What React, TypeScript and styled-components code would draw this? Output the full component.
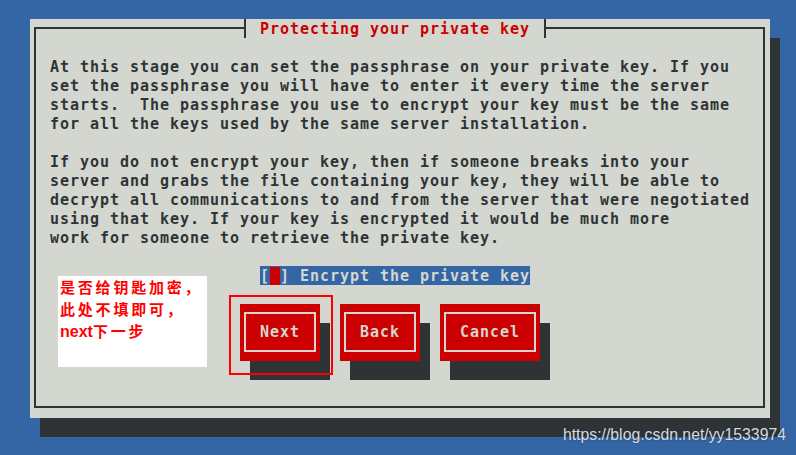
import React, { ReactElement } from 'react';
import styled, { createGlobalStyle } from 'styled-components';

const Colors = {
  desktop: '#3465a4',
  panel: '#d3d7cf',
  ink: '#2e3436',
  red: '#cc0000',
  note: '#ff0000',
};

const GlobalStyle = createGlobalStyle`
  html, body {
    margin: 0;
    padding: 0;
    background: ${Colors.desktop};
  }
`;

const Screen = styled.div`
  position: relative;
  width: 796px;
  height: 455px;
  padding: 19px 0 0 30px;
  box-sizing: border-box;
  overflow: hidden;
  background: ${Colors.desktop};
  font-family: "DejaVu Sans Mono", "Liberation Mono", monospace;
  font-weight: bold;
  font-size: 15px;
  letter-spacing: 0.97px;
  line-height: 19px;
`;

const Dialog = styled.div`
  position: relative;
  width: 740px;
  height: 399px;
  padding: 8px 5px 10px 4px;
  box-sizing: border-box;
  background: ${Colors.panel};
  box-shadow: 10px 19px 0 ${Colors.ink};
`;

const Frame = styled.div`
  height: 100%;
  border: 2px solid ${Colors.ink};
  box-sizing: border-box;
  padding: 28px 0 0 14px;
  display: flex;
  flex-direction: column;
`;

const Title = styled.div`
  position: absolute;
  left: 210px;
  top: 0;
  height: 19px;
  display: flex;
  background: ${Colors.panel};
`;

const Tee = styled.span<{ $side: 'left' | 'right' }>`
  position: relative;
  width: 10px;
  height: 19px;

  &::before {
    content: '';
    position: absolute;
    left: 4px;
    top: 0;
    width: 2px;
    height: 19px;
    background: ${Colors.ink};
  }

  &::after {
    content: '';
    position: absolute;
    top: 8px;
    height: 2px;
    width: 6px;
    background: ${Colors.ink};
    ${(p) => (p.$side === 'left' ? 'left: 0;' : 'right: 0;')}
  }
`;

const TitleText = styled.span`
  height: 19px;
  line-height: 20px;
  color: ${Colors.red};
  white-space: pre;
`;

/* line-height a touch taller than the cell drops the baseline 1px, like the console font */
const Line = styled.div`
  height: 19px;
  line-height: 21px;
  color: ${Colors.ink};
  white-space: pre;
`;

const CheckRow = styled.div`
  display: flex;
  height: 19px;
  margin: 19px 0 0 210px;
`;

const Highlight = styled.span`
  background: ${Colors.desktop};
  color: ${Colors.panel};
  white-space: pre;
  line-height: 20px;
  height: 19px;
`;

const Cursor = styled.span`
  background: ${Colors.red};
`;

const ButtonRow = styled.div`
  display: flex;
  gap: 20px;
  margin: 19px 0 0 190px;
`;

const Button = styled.div`
  position: relative;
  padding: 8px 4px 9px;
  background: ${Colors.red};
  box-shadow: 10px 19px 0 ${Colors.ink};
`;

const ButtonFace = styled.div`
  height: 40px;
  box-sizing: border-box;
  border: 2px solid ${Colors.panel};
  padding: 1px 14px 0;
  display: flex;
  align-items: center;
  color: ${Colors.panel};
  white-space: pre;
`;

const Mark = styled.div`
  position: absolute;
  left: -11px;
  top: -9px;
  width: 104px;
  height: 80px;
  box-sizing: border-box;
  border: 2px solid ${Colors.note};
`;

const Note = styled.div`
  position: absolute;
  left: 58px;
  top: 276px;
  width: 149px;
  height: 91px;
  box-sizing: border-box;
  padding: 0 0 0 2px;
  background: #ffffff;
  color: ${Colors.note};
  font-family: "Noto Sans CJK SC", sans-serif;
  font-size: 15px;
  letter-spacing: 2.8px;
  line-height: 22px;
  font-weight: bold;
`;

const NoteLine = styled.div`
  height: 22px;
  white-space: nowrap;
`;

const NoteLatin = styled.span`
  font-family: "Liberation Sans", Arial, sans-serif;
  font-size: 16px;
  letter-spacing: 0;
`;

const Watermark = styled.div`
  position: absolute;
  right: 10px;
  top: 425px;
  font-family: "Liberation Sans", Arial, sans-serif;
  font-weight: normal;
  font-size: 15.8px;
  letter-spacing: 0;
  line-height: 20px;
  color: #d6dade;
  text-shadow: 0 0 2px rgba(30, 40, 50, 0.6);
`;

const paragraphs = [
  [
    'At this stage you can set the passphrase on your private key. If you',
    'set the passphrase you will have to enter it every time the server',
    'starts.  The passphrase you use to encrypt your key must be the same',
    'for all the keys used by the same server installation.',
  ],
  [
    'If you do not encrypt your key, then if someone breaks into your',
    'server and grabs the file containing your key, they will be able to',
    'decrypt all communications to and from the server that were negotiated',
    'using that key. If your key is encrypted it would be much more',
    'work for someone to retrieve the private key.',
  ],
];

const buttons = ['Next', 'Back', 'Cancel'];

const App = (): ReactElement => {
  return (
    <>
      <GlobalStyle />
      <Screen>
        <Dialog>
          <Title>
            <Tee $side="left" />
            <TitleText> Protecting your private key </TitleText>
            <Tee $side="right" />
          </Title>
          <Frame>
            {paragraphs[0].map((l) => (
              <Line key={l}>{l}</Line>
            ))}
            <Line />
            {paragraphs[1].map((l) => (
              <Line key={l}>{l}</Line>
            ))}
            <CheckRow>
              <Highlight>
                [<Cursor> </Cursor>] Encrypt the private key
              </Highlight>
            </CheckRow>
            <ButtonRow>
              {buttons.map((b, i) => (
                <Button key={b}>
                  <ButtonFace>{b}</ButtonFace>
                  {i === 0 && <Mark />}
                </Button>
              ))}
            </ButtonRow>
          </Frame>
        </Dialog>
        <Note>
          <NoteLine>是否给钥匙加密，</NoteLine>
          <NoteLine>此处不填即可，</NoteLine>
          <NoteLine>
            <NoteLatin>next</NoteLatin>下一步
          </NoteLine>
        </Note>
        <Watermark>https://blog.csdn.net/yy1533974</Watermark>
      </Screen>
    </>
  );
};

export default App;
